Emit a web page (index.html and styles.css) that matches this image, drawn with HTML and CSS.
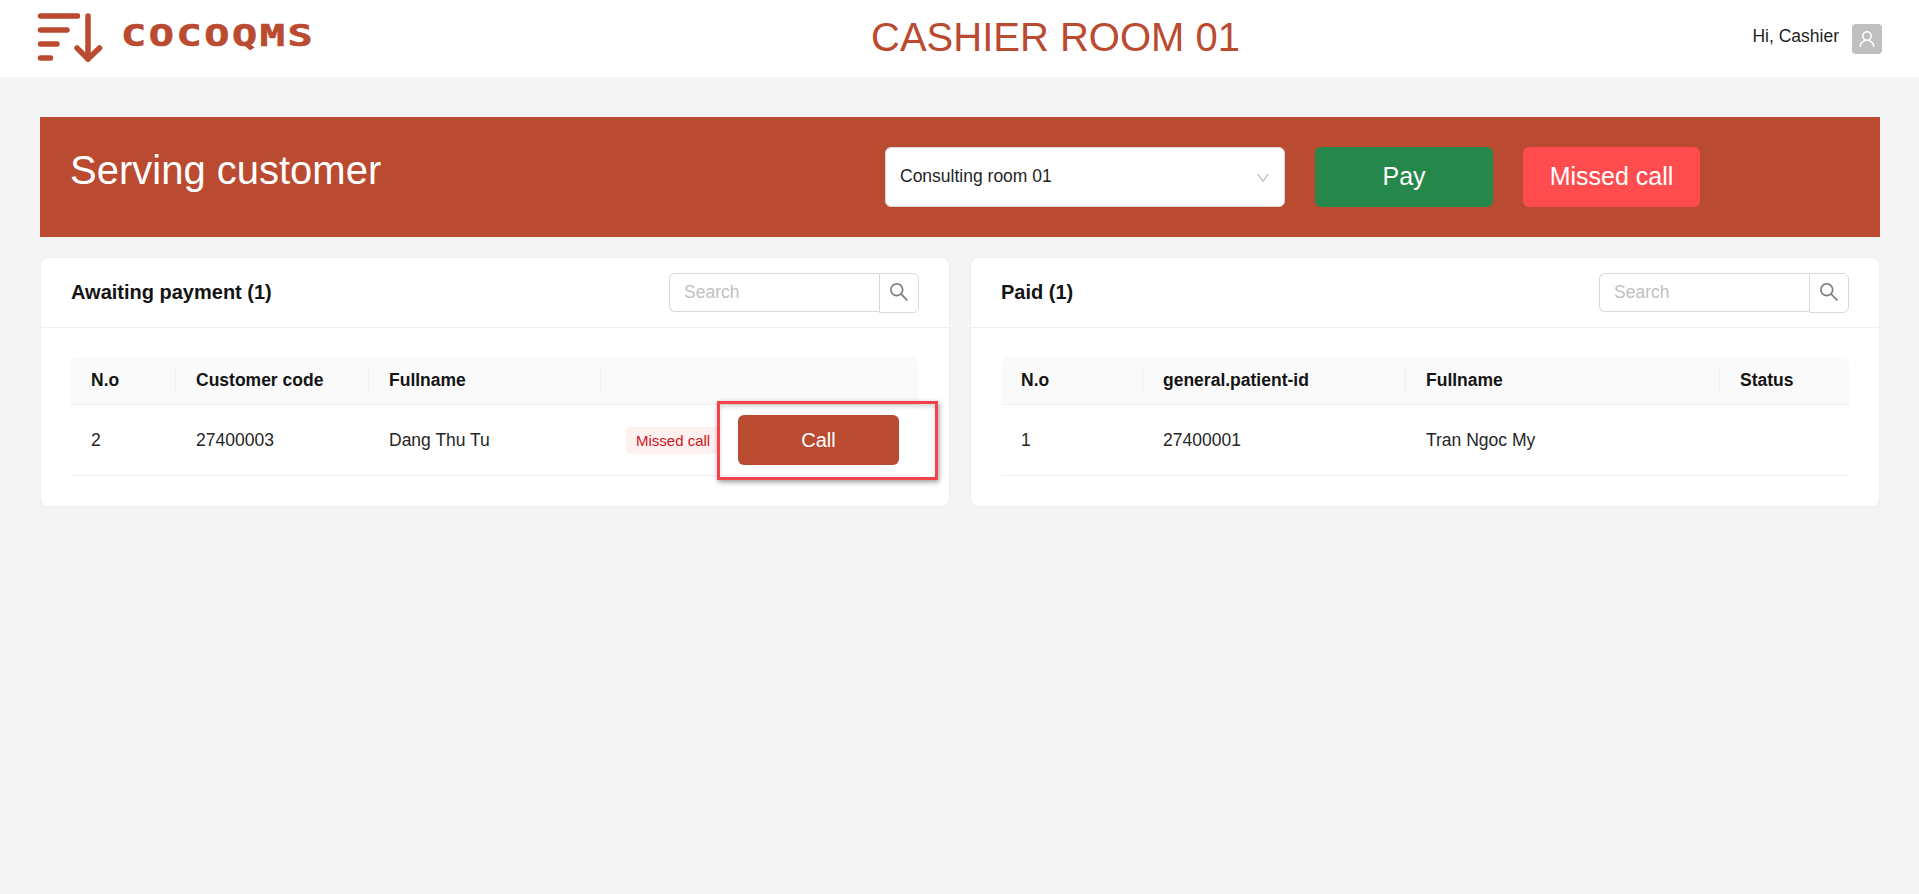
FILE: index.html
```html
<!DOCTYPE html>
<html lang="en">
<head>
<meta charset="utf-8">
<title>Cashier Room 01</title>
<link rel="stylesheet" href="styles.css">
</head>
<body>
<header class="topbar">
  <div class="brand">
    <svg class="brand-mark" width="68" height="54" viewBox="0 0 68 54" fill="none" stroke="#ba4a30" stroke-width="5.5" stroke-linecap="round" stroke-linejoin="round">
      <path d="M4.5 6H41.5"/>
      <path d="M4.5 20H31"/>
      <path d="M4.5 34H21"/>
      <path d="M4.5 48H14.5"/>
      <path d="M52 6V49"/>
      <path d="M41 38L52 49L63.500 38"/>
    </svg>
    <span class="brand-name">COCOQMS</span>
  </div>
  <h1 class="room-title">CASHIER ROOM 01</h1>
  <div class="account">
    <span class="account-name">Hi, Cashier</span>
    <span class="avatar">
      <svg width="18" height="18" viewBox="64 64 896 896" fill="#fff"><path d="M858.5 763.6a374 374 0 00-80.6-119.5 375.63 375.63 0 00-119.5-80.6c-.4-.2-.8-.3-1.2-.5C719.5 518 760 444.7 760 362c0-137-111-248-248-248S264 225 264 362c0 82.7 40.5 156 102.8 201.1-.4.2-.8.3-1.2.5-44.8 18.9-85 46-119.5 80.6a375.63 375.63 0 00-80.6 119.5A371.7 371.7 0 00136 901.8a8 8 0 008 8.2h60c4.4 0 7.9-3.5 8-7.8 2-77.2 33-149.5 87.8-204.3 56.7-56.7 132-87.9 212.2-87.9s155.500 31.200 212.200 87.900C779 752.700 810 825 812 902.200c.1 4.400 3.600 7.800 8 7.800h60a8 8 0 008-8.200c-1-47.800-10.900-94.300-29.500-138.200zM512 534c-45.900 0-89.100-17.900-121.600-50.400S340 407.900 340 362c0-45.900 17.900-89.100 50.400-121.600S466.100 190 512 190s89.100 17.900 121.600 50.400S684 316.100 684 362c0 45.900-17.900 89.100-50.400 121.600S557.900 534 512 534z"/></svg>
    </span>
  </div>
</header>

<main class="page">
  <section class="banner">
    <h2 class="banner-title">Serving customer</h2>
    <div class="banner-controls">
      <div class="room-select">
        <span class="select-value">Consulting room 01</span>
        <svg class="select-caret" width="14" height="14" viewBox="64 64 896 896" fill="#bfbfbf"><path d="M884 256h-75c-5.100 0-9.900 2.500-12.900 6.600L512 654.200 227.900 262.600c-3-4.100-7.800-6.600-12.900-6.600h-75c-6.500 0-10.300 7.400-6.500 12.700l352.600 486.100c12.800 17.600 39 17.600 51.700 0l352.600-486.100c3.900-5.300.1-12.700-6.400-12.700z"/></svg>
      </div>
      <button class="action action-pay" type="button">Pay</button>
      <button class="action action-missed" type="button">Missed call</button>
    </div>
  </section>

  <div class="panels">
    <section class="panel">
      <div class="panel-head">
        <h3 class="panel-title">Awaiting payment (1)</h3>
        <div class="search">
          <span class="search-input">Search</span>
          <span class="search-btn">
            <svg width="20" height="20" viewBox="64 64 896 896" fill="#7f7f7f"><path d="M909.600 854.500L649.900 594.800C690.200 542.700 712 479 712 412c0-80.200-31.300-155.400-87.900-212.100-56.600-56.700-132-87.900-212.100-87.900s-155.500 31.300-212.100 87.900C143.200 256.500 112 331.800 112 412c0 80.100 31.300 155.500 87.900 212.100C256.500 680.800 331.800 712 412 712c67 0 130.600-21.800 182.700-62l259.700 259.600a8.200 8.200 0 0011.600 0l43.600-43.500a8.200 8.200 0 000-11.600zM570.400 570.400C528 612.700 471.800 636 412 636s-116-23.300-158.400-65.600C211.300 528 188 471.800 188 412s23.300-116.100 65.600-158.400C296 211.300 352.200 188 412 188s116.100 23.200 158.400 65.600S636 352.200 636 412s-23.300 116.100-65.600 158.400z"/></svg>
          </span>
        </div>
      </div>
      <div class="panel-body">
        <table class="grid">
          <colgroup><col class="w-105"><col class="w-193"><col class="w-232"><col></colgroup>
          <thead>
            <tr><th>N.o</th><th>Customer code</th><th>Fullname</th><th></th></tr>
          </thead>
          <tbody>
            <tr>
              <td>2</td>
              <td>27400003</td>
              <td>Dang Thu Tu</td>
              <td class="cell-actions">
                <div class="row-actions">
                  <span class="tag">Missed call</span>
                  <span class="call-wrap">
                    <button class="call" type="button">Call</button>
                    <span class="highlight"></span>
                  </span>
                </div>
              </td>
            </tr>
          </tbody>
        </table>
      </div>
    </section>

    <section class="panel">
      <div class="panel-head">
        <h3 class="panel-title">Paid (1)</h3>
        <div class="search">
          <span class="search-input">Search</span>
          <span class="search-btn">
            <svg width="20" height="20" viewBox="64 64 896 896" fill="#7f7f7f"><path d="M909.600 854.500L649.900 594.800C690.200 542.700 712 479 712 412c0-80.200-31.300-155.400-87.900-212.100-56.600-56.700-132-87.900-212.100-87.900s-155.500 31.300-212.100 87.900C143.200 256.500 112 331.800 112 412c0 80.100 31.300 155.500 87.900 212.100C256.500 680.800 331.800 712 412 712c67 0 130.600-21.800 182.700-62l259.700 259.600a8.200 8.200 0 0011.600 0l43.600-43.500a8.200 8.200 0 000-11.600zM570.400 570.400C528 612.700 471.800 636 412 636s-116-23.300-158.400-65.600C211.300 528 188 471.800 188 412s23.300-116.100 65.600-158.400C296 211.300 352.200 188 412 188s116.100 23.200 158.400 65.600S636 352.200 636 412s-23.300 116.100-65.600 158.400z"/></svg>
          </span>
        </div>
      </div>
      <div class="panel-body">
        <table class="grid">
          <colgroup><col class="w-142"><col class="w-263"><col class="w-314"><col></colgroup>
          <thead>
            <tr><th>N.o</th><th>general.patient-id</th><th>Fullname</th><th>Status</th></tr>
          </thead>
          <tbody>
            <tr><td>1</td><td>27400001</td><td>Tran Ngoc My</td><td></td></tr>
          </tbody>
        </table>
      </div>
    </section>
  </div>
</main>
</body>
</html>
```

FILE: styles.css
```css
* { box-sizing: border-box; }

html, body { height: 100%; }

body {
  margin: 0;
  background: #f4f4f4;
  color: #1f1f1f;
  font-family: "Liberation Sans", Arial, sans-serif;
  font-size: 17.5px;
  overflow: hidden;
}

/* top bar */
.topbar {
  display: grid;
  grid-template-columns: 871px 1fr auto;
  align-items: center;
  height: 77px;
  padding-right: 37px;
  background: #fff;
}

.brand {
  display: flex;
  align-items: flex-start;
  height: 77px;
  padding: 10px 0 0 36px;
}

.brand-mark { flex: none; }

.brand-name {
  margin: 7px 0 0 17px;
  color: #ba4a30;
  font-family: "DejaVu Sans Mono", monospace;
  font-size: 31px;
  font-weight: 700;
  line-height: 36px;
  letter-spacing: 1.9px;
  -webkit-text-stroke: 0.6px #ba4a30;
  transform: scaleX(1.35);
  transform-origin: left center;
}

.room-title {
  margin: 0;
  color: #ba4a30;
  font-size: 40px;
  font-weight: 400;
  line-height: 48px;
  position: relative;
  top: -2px;
}

.account {
  display: flex;
  align-items: center;
  gap: 13px;
}

.account-name { line-height: 24px; position: relative; top: -3px; }

.avatar {
  display: flex;
  align-items: center;
  justify-content: center;
  width: 30px;
  height: 30px;
  border-radius: 4px;
  background: #bfbfbf;
}

/* page */
.page { padding: 40px 39px 0 40px; }

.banner {
  display: grid;
  grid-template-columns: 815px auto;
  align-items: start;
  height: 120px;
  padding: 30px 0 30px 30px;
  background: #ba4a30;
}

.banner-title {
  margin: 0;
  color: #fff;
  font-size: 40px;
  font-weight: 400;
  line-height: 46px;
}

.banner-controls {
  display: flex;
  gap: 30px;
}

.room-select {
  display: flex;
  align-items: center;
  justify-content: space-between;
  width: 400px;
  height: 60px;
  padding: 0 14px;
  border: 1px solid #d9d9d9;
  border-radius: 6px;
  background: #fff;
  line-height: 24px;
}

.select-value { padding-bottom: 2px; }

.select-caret { position: relative; top: 1px; }

.action {
  height: 60px;
  width: 178px;
  padding: 0 0 2px;
  border: 0;
  border-radius: 6px;
  color: #fff;
  font: 25px "Liberation Sans", Arial, sans-serif;
}

.action-pay { background: #25874a; }
.action-missed { background: #ff4d4f; width: 177px; }

/* panels */
.panels {
  display: grid;
  grid-template-columns: 1fr 1fr;
  gap: 20px;
  margin-top: 20px;
}

.panel {
  border: 1px solid #f0f0f0;
  border-radius: 8px;
  background: #fff;
}

.panel-head {
  display: flex;
  align-items: center;
  justify-content: space-between;
  height: 70px;
  padding: 0 30px;
  border-bottom: 1px solid #f0f0f0;
}

.panel-title {
  margin: 0;
  color: #141414;
  font-size: 20px;
  font-weight: 700;
}

.search {
  display: flex;
  align-items: flex-start;
  width: 250px;
}

.search-input {
  flex: 1;
  height: 39px;
  padding: 0 14px;
  border: 1px solid #d9d9d9;
  border-right: 0;
  border-radius: 6px 0 0 6px;
  color: #bfbfbf;
  line-height: 37px;
}

.search-btn {
  display: flex;
  align-items: center;
  justify-content: center;
  width: 40px;
  height: 40px;
  border: 1px solid #d9d9d9;
  border-radius: 0 6px 6px 0;
  background: #fff;
  padding-bottom: 1px;
}

.panel-body { padding: 29px 30px 30px; }

/* tables */
.grid {
  width: 100%;
  table-layout: fixed;
  border-collapse: separate;
  border-spacing: 0;
}

.w-105 { width: 105px; }
.w-193 { width: 193px; }
.w-232 { width: 232px; }
.w-142 { width: 142px; }
.w-263 { width: 263px; }
.w-314 { width: 314px; }

.grid th {
  position: relative;
  height: 48px;
  padding: 0 20px 1px;
  border-bottom: 1px solid #f0f0f0;
  background: #fafafa;
  color: #141414;
  font-size: 17.5px;
  font-weight: 700;
  text-align: left;
}

.grid th:first-child { border-top-left-radius: 8px; }
.grid th:last-child { border-top-right-radius: 8px; }

.grid th:not(:last-child)::before {
  content: "";
  position: absolute;
  top: 10px;
  right: 0;
  width: 1px;
  height: 27px;
  background: #f0f0f0;
}

.grid td {
  height: 71px;
  padding: 0 20px;
  border-bottom: 1px solid #f0f0f0;
  color: #262626;
}

.row-actions {
  display: flex;
  align-items: center;
  justify-content: flex-end;
  gap: 20px;
}

.tag {
  width: 92px;
  height: 27px;
  padding-left: 10px;
  border-radius: 4px;
  background: #fff1f0;
  color: #cf1322;
  font-size: 15px;
  line-height: 27px;
  white-space: nowrap;
}

.call-wrap {
  position: relative;
  display: block;
  width: 161px;
  height: 50px;
}

.call {
  display: block;
  width: 100%;
  height: 100%;
  border: 0;
  border-radius: 6px;
  background: #ba4a30;
  color: #fff;
  font: 20px "Liberation Sans", Arial, sans-serif;
}

/* annotation frame drawn over the screenshot */
.highlight {
  position: absolute;
  top: -14px;
  right: -39px;
  bottom: -15px;
  left: -21px;
  border: 3px solid #f4434a;
  box-shadow: 1px 2px 5px rgba(0, 0, 0, .4), inset 0 3px 4px rgba(0, 0, 0, .15);
  pointer-events: none;
}
```
